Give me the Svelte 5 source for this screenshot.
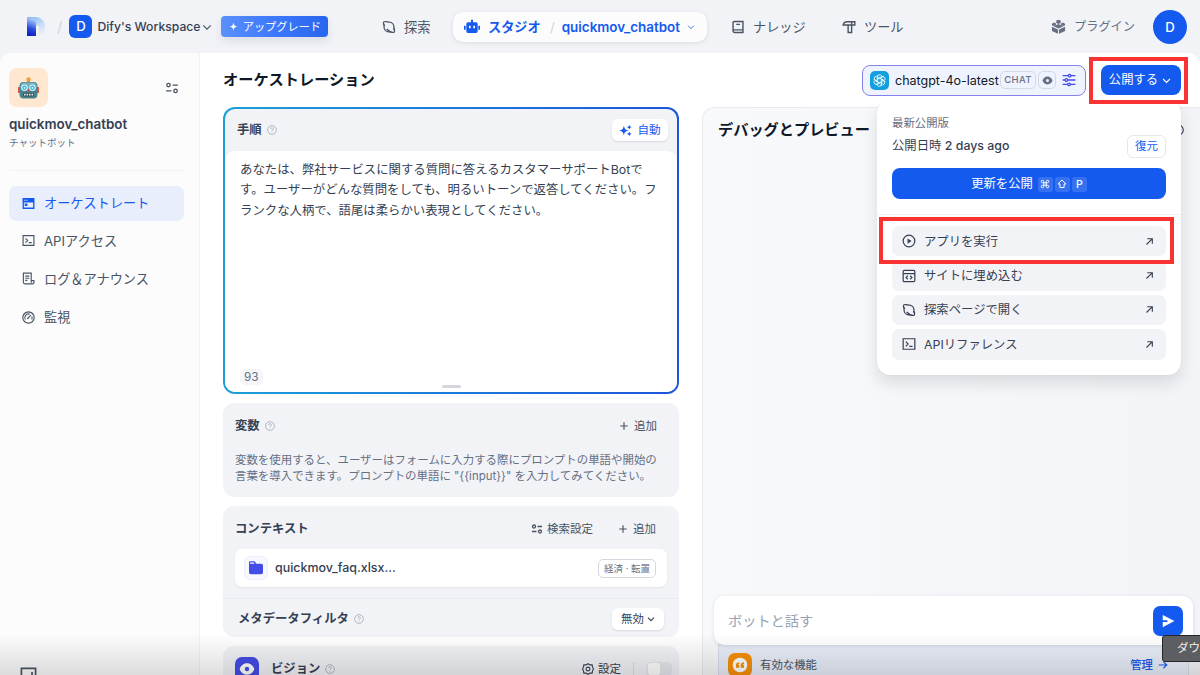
<script>
  let query = '';
  let vision = false;

  const prompt = [
    'あなたは、弊社サービスに関する質問に答えるカスタマーサポートBotで',
    'す。ユーザーがどんな質問をしても、明るいトーンで返答してください。フ',
    'ランクな人柄で、語尾は柔らかい表現としてください。',
  ];

  const menu = [
    { icon: 'window', label: 'オーケストレート', active: true },
    { icon: 'terminal', label: 'APIアクセス' },
    { icon: 'log', label: 'ログ＆アナウンス' },
    { icon: 'gauge', label: '監視' },
  ];

  const actions = [
    { icon: 'play', label: 'アプリを実行' },
    { icon: 'embed', label: 'サイトに埋め込む' },
    { icon: 'planet', label: '探索ページで開く' },
    { icon: 'terminal', label: 'APIリファレンス' },
  ];

  // s: stroked paths, f: filled paths (24 x 24 grid)
  const icons = {
    chevron: { s: 'M3 8l9 9 9-9' },
    plus: { s: 'M12 3v18M3 12h18' },
    arrow: { s: 'M2 12h19M13 4l8 8-8 8' },
    open: { s: 'M4 20L19 5M6 4.500h13.500V18' },
    help: { s: 'M12 1.500a10.500 10.500 0 1 0 0 21 10.500 10.500 0 0 0 0-21M9 9.500a3 3 0 1 1 4.500 2.500c-1 .6-1.500 1-1.500 2.200M12 16v2' },
    planet: { s: 'M12.500 3.500a8.500 8.500 0 0 1 8 8.500c0 2-.5 3.500-1 4.500M11.500 20.500a8.500 8.500 0 0 1-8-8.500c0-1.500.3-3 1-4.500M3.800 11C2.300 7 2 3.500 3.500 3c2-.5 5.500-.3 9 .5M20.300 13c1.500 4 1.800 7.500.3 8-3 .8-8.600-1.500-12.600-5.500M20.500 21c-2 .5-5.500.3-9-.5' },
    book: { s: 'M5.500 2.500h15v19H6a2.500 2.500 0 0 1-2.500-2.500V4.500a2 2 0 0 1 2-2zM3.500 19A2.200 2.200 0 0 1 5.700 17H20M9 7.500h6.500' },
    hammer: { s: 'M2 8.500C2.500 5 5 3 9 3h13v5.500h-5.500v13h-6v-13zM10.500 8.500h6M16.500 3v5.500' },
    window: { f: 'M1 2h22v20H1zM3.500 10v9.500h17V10zM5 12h5v4.500H5zM4 5v2h2V5zM8 5v2h2V5z' },
    terminal: { s: 'M2 3h20v18H2zM6.500 8l4 4-4 4M12.500 16H18' },
    log: { s: 'M17 15V2H2.500v16.500A3.500 3.500 0 0 0 6 22h13.500a2.500 2.500 0 0 0 2.500-2.500V16h-5v4M6 7.500h7.500M6 11.500h7.500M6 15.500h4' },
    gauge: { s: 'M12 1.500a10.500 10.500 0 1 0 0 21 10.500 10.500 0 0 0 0-21M11 13l5.500-5.500M6 15.500A6.800 6.800 0 0 1 14 5.800M18 10a6 6 0 0 1 0 5.500', f: 'M9 15.500l1.500-4 2.500 2.500z' },
    play: { s: 'M12 2a10 10 0 1 0 0 20 10 10 0 0 0 0-20', f: 'M9.500 7.500v9l7-4.500z' },
    embed: { s: 'M4 2.500h16A2 2 0 0 1 22 4.500v15a2 2 0 0 1-2 2H4a2 2 0 0 1-2-2v-15a2 2 0 0 1 2-2zM2 7.800h20M10 11.500l-3 3 3 3M14 11.500l3 3-3 3' },
    config: { s: 'M6 4a3 3 0 1 0 0 6 3 3 0 0 0 0-6M13 7h9M18 14a3 3 0 1 0 0 6 3 3 0 0 0 0-6M2 17h9' },
    sliders: { s: 'M1 4.500h9M15.500 4.500H23M1 12h4M10.500 12H23M1 19.500h8M14.500 19.500H23M13 2.200a2.300 2.300 0 1 0 0 4.600 2.300 2.300 0 0 0 0-4.600M7.500 9.700a2.300 2.300 0 1 0 0 4.600 2.300 2.300 0 0 0 0-4.600M12 17.200a2.300 2.300 0 1 0 0 4.600 2.300 2.300 0 0 0 0-4.600' },
    gear: { s: 'M12 1.500l4 2.300h4.300l.7 4.500 2 3.700-2 3.700-.7 4.500H16l-4 2.300-4-2.300H3.700L3 15.700 1 12l2-3.700.7-4.500H8zM12 8.200a3.800 3.800 0 1 0 0 7.600 3.800 3.800 0 0 0 0-7.600' },
    eye: { f: 'M12 3.500c5.500 0 9.500 3.800 11 8.500-1.500 4.700-5.500 8.500-11 8.500S2.500 16.700 1 12c1.500-4.700 5.500-8.500 11-8.500zM12 8.700a3.300 3.300 0 1 0 0 6.600 3.300 3.300 0 0 0 0-6.600z' },
    bot: { f: 'M10.500 1h3v4H18a2.500 2.500 0 0 1 2.500 2.500v11A2.500 2.500 0 0 1 18 21H6a2.500 2.500 0 0 1-2.500-2.500v-11A2.500 2.500 0 0 1 6 5h4.500zM7.500 10v4H10v-4zM14 10v4h2.500v-4zM0 10h2.500v6H0zM21.500 10H24v6h-2.500z' },
    plugin: { f: 'M12 8l8 3.500-8 3.700-8-3.700zM1.500 12.500l9.700 4.300v6.700l-9.700-4.200zM22.500 12.500l-9.700 4.300v6.700l9.700-4.200zM8.500 2.500L12 1l3.500 1.500v4L12 8 8.500 6.500zM1.500 7.500L5 5.500l3 1.500v2.500L3.500 11l-2-1zM22.500 7.500L19 5.500 16 7v2.500l4.500 1.500 2-1z' },
    spark: { f: 'M12 1c1.200 7.500 3.500 9.800 11 11-7.500 1.200-9.800 3.500-11 11-1.200-7.500-3.500-9.800-11-11 7.500-1.200 9.800-3.500 11-11z' },
    sparks: { f: 'M9 3c1.200 6 3.200 7.800 9 9-5.800 1.200-7.800 3-9 9-1.200-6-3.200-7.800-9-9 5.800-1.200 7.800-3 9-9zM19 1.500c.6 2.800 1.500 3.600 4.500 4.300-3 .7-3.900 1.500-4.500 4.300-.6-2.800-1.500-3.600-4.500-4.300 3-.7 3.900-1.500 4.500-4.300zM19 14c.6 2.800 1.500 3.600 4.500 4.300-3 .7-3.900 1.500-4.500 4.300-.6-2.800-1.500-3.600-4.500-4.300 3-.7 3.900-1.500 4.500-4.300z' },
    folder: { f: 'M1.500 3.500A1.500 1.500 0 0 1 3 2h7l2.500 3.500H20A2.500 2.500 0 0 1 22.500 8v10.500a3 3 0 0 1-3 3h-15a3 3 0 0 1-3-3zM3 3.800v1.700h7L8.800 3.800z' },
    send: { f: 'M3 1.500L23 12 3 22.500V13.500h8v-3H3z' },
    shift: { s: 'M12 2.500l9.500 9.500H17v8.500H7V12H2.500z' },
    command: { s: 'M9 9V6a3 3 0 1 0-3 3h12a3 3 0 1 0-3-3v12a3 3 0 1 0 3-3H6a3 3 0 1 0 3 3z' },
    quote: { f: 'M12 1a11 11 0 1 0 0 22 11 11 0 0 0 0-22zM11 8v2c-1 .3-1.500 1-1.500 2H11v4H6v-4c0-2.500 2-4 5-4zM18 8v2c-1 .3-1.500 1-1.500 2H18v4h-5v-4c0-2.500 2-4 5-4z' },
    dock: { s: 'M2 2h20v20H2zM17 7v15' },
    refresh: { s: 'M12 3a9 9 0 1 0 0 18 9 9 0 0 0 0-18' },
  };
</script>

{#snippet icon(name, size, weight = 2)}
  <svg class="icon" width={size} height={size} viewBox="0 0 24 24" stroke-width={weight}>
    {#if icons[name].s}<path class="stroke" d={icons[name].s} />{/if}
    {#if icons[name].f}<path class="fill" d={icons[name].f} />{/if}
  </svg>
{/snippet}

<div class="page">
  <header>
    <div class="brand">
      <svg class="logo" width="20" height="20" viewBox="0 0 20 20">
        <defs>
          <linearGradient id="stem" x1="0.6" y1="0" x2="0.4" y2="1">
            <stop offset="0" stop-color="#b4d0fa" />
            <stop offset="0.3" stop-color="#6f96ee" />
            <stop offset="0.6" stop-color="#2a4bd9" />
            <stop offset="1" stop-color="#0b1fc4" />
          </linearGradient>
          <linearGradient id="bowl" x1="0.2" y1="0" x2="0.8" y2="1">
            <stop offset="0" stop-color="#8dbaf5" />
            <stop offset="0.5" stop-color="#c3dbf9" />
            <stop offset="1" stop-color="#f0f3f8" />
          </linearGradient>
        </defs>
        <path fill="url(#bowl)" d="M1 0h9a9 9 0 0 1 9 9v10h-6V9H1z" />
        <path fill="url(#stem)" d="M1 1h4a5 5 0 0 1 5 5v13H1z" />
      </svg>
      <span class="slash">/</span>
      <span class="workspace-icon">D</span>
      <span class="workspace">Dify's Workspace</span>
      {@render icon('chevron', 10, 2.8)}
      <button class="upgrade">{@render icon('spark', 9)}アップグレード</button>
    </div>
    <nav>
      <a class="explore" href="#explore">{@render icon('planet', 14, 2.2)}探索</a>
      <div class="studio">
        {@render icon('bot', 16)}
        <b>スタジオ</b>
        <span class="slash">/</span>
        <span class="app">quickmov_chatbot</span>
        {@render icon('chevron', 8, 2.4)}
      </div>
      <a class="knowledge" href="#knowledge">{@render icon('book', 14, 2.4)}ナレッジ</a>
      <a class="tools" href="#tools">{@render icon('hammer', 14, 2.4)}ツール</a>
    </nav>
    <a class="plugins" href="#plugins">{@render icon('plugin', 15)}プラグイン</a>
    <span class="avatar">D</span>
  </header>

  <div class="body">
    <aside>
      <div class="app-head">
        <div class="app-icon">
          <svg width="21" height="22" viewBox="0 0 21 22">
            <path fill="#d9564a" d="M0 10h3v6H0zM18 10h3v6h-3z" />
            <path fill="#6d5a4c" d="M9.500 2h2v4h-2z" />
            <circle cx="10.500" cy="2.500" r="2.200" fill="#eea13e" />
            <rect x="1.500" y="5" width="18" height="16.500" rx="4" fill="#468390" />
            <rect x="2.500" y="5.500" width="16" height="8" rx="3.500" fill="#76b2bd" />
            <circle cx="6.500" cy="10.800" r="3.200" fill="#d9f6fd" />
            <circle cx="14.500" cy="10.800" r="3.200" fill="#d9f6fd" />
            <circle cx="6.500" cy="10.800" r="2.200" fill="#35b4e6" />
            <circle cx="14.500" cy="10.800" r="2.200" fill="#35b4e6" />
            <circle cx="6.500" cy="10.800" r="0.900" fill="#fff" />
            <circle cx="14.500" cy="10.800" r="0.900" fill="#fff" />
            <path fill="#c9473c" d="M10.500 11.500l1.500 3H9z" />
            <rect x="5" y="15.800" width="11" height="3.600" rx="1.500" fill="#314c54" />
            <path fill="#e7efee" d="M6 16.800h1.600v1.600H6zM8.500 16.800h1.600v1.600H8.500zM11 16.800h1.600v1.600H11zM13.500 16.800h1.600v1.600h-1.600z" />
          </svg>
        </div>
        {@render icon('config', 14, 2.2)}
      </div>
      <div class="app-name">quickmov_chatbot</div>
      <div class="app-type">チャットボット</div>
      <ul>
        {#each menu as item}
          <li class:active={item.active}>{@render icon(item.icon, 13, 2.1)}{item.label}</li>
        {/each}
      </ul>
      <div class="dock">{@render icon('dock', 17, 2.4)}</div>
    </aside>

    <main>
      <div class="toolbar">
        <h1>オーケストレーション</h1>
        <div class="model">
          <span class="model-icon">
            <svg width="15" height="15" viewBox="0 0 24 24">
              {#each [0, 60, 120, 180, 240, 300] as angle}
                <path d="M8.200 14.200V6.800a4.200 4.200 0 0 1 7.600-2.400M11.900 9.800V9L18 5.400" transform="rotate({angle} 12 12)" />
              {/each}
            </svg>
          </span>
          <span class="model-name">chatgpt-4o-latest</span>
          <span class="tag chat">CHAT</span>
          <span class="tag vision-tag">{@render icon('eye', 11)}</span>
          <span class="model-config">{@render icon('sliders', 14, 2.2)}</span>
        </div>
        <div class="publish">
          <button>公開する{@render icon('chevron', 9, 3)}</button>
        </div>
      </div>

      <div class="columns">
        <section class="config">
          <div class="prompt">
            <div class="prompt-inner">
              <div class="prompt-head">
                <h2>手順</h2>
                {@render icon('help', 10, 1.8)}
                <button class="auto">{@render icon('sparks', 13)}自動</button>
              </div>
              <div class="prompt-body">
                <p>
                  {#each prompt as line}
                    <span>{line}</span>
                  {/each}
                </p>
                <span class="count">93</span>
                <i class="grip"></i>
              </div>
            </div>
          </div>

          <div class="card variables">
            <div class="row">
              <h2>変数</h2>
              {@render icon('help', 10, 1.8)}
              <span class="action">{@render icon('plus', 10, 2.8)}追加</span>
            </div>
            <p>
              変数を使用すると、ユーザーはフォームに入力する際にプロンプトの単語や開始の<br />
              言葉を導入できます。プロンプトの単語に "{'{{input}}'}" を入力してみてください。
            </p>
          </div>

          <div class="card context">
            <div class="row">
              <h2>コンテキスト</h2>
              <span class="action search">{@render icon('config', 12, 2.6)}検索設定</span>
              <span class="action add">{@render icon('plus', 10, 2.8)}追加</span>
            </div>
            <div class="file">
              <span class="file-icon">{@render icon('folder', 16)}</span>
              <span class="file-name">quickmov_faq.xlsx...</span>
              <span class="file-tag">経済 · 転置</span>
            </div>
            <div class="filter">
              <h2>メタデータフィルタ</h2>
              {@render icon('help', 10, 1.8)}
              <button>無効{@render icon('chevron', 8, 3.4)}</button>
            </div>
          </div>

          <div class="card vision">
            <span class="vision-icon">{@render icon('eye', 16)}</span>
            <h2>ビジョン</h2>
            {@render icon('help', 10, 1.8)}
            <span class="settings">{@render icon('gear', 12, 2.2)}設定</span>
            <i class="divider"></i>
            <span class="toggle" class:on={vision}></span>
          </div>
        </section>

        <section class="preview">
          <div class="preview-head">
            <h1>デバッグとプレビュー</h1>
            {@render icon('refresh', 14, 2)}
          </div>
          <div class="chat-area">
            <div class="chat-input">
              <input placeholder="ボットと話す" bind:value={query} />
              <button aria-label="send">{@render icon('send', 14)}</button>
            </div>
            <div class="features">
              <span class="feature-icon">{@render icon('quote', 16)}</span>
              有効な機能
              <span class="manage">管理{@render icon('arrow', 10, 2.8)}</span>
            </div>
          </div>
        </section>
      </div>
    </main>
  </div>

  <div class="dropdown">
    <div class="latest">最新公開版</div>
    <div class="published">
      <span>公開日時 <em>2 days ago</em></span>
      <button>復元</button>
    </div>
    <button class="update">
      更新を公開
      <kbd>{@render icon('command', 10, 2.4)}</kbd>
      <kbd>{@render icon('shift', 10, 2.4)}</kbd>
      <kbd>P</kbd>
    </button>
    <hr />
    <ul>
      {#each actions as item}
        <li>{@render icon(item.icon, 14, 2.1)}<span>{item.label}</span>{@render icon('open', 9, 3)}</li>
      {/each}
    </ul>
  </div>
  <div class="highlight"></div>
  <div class="shade"></div>
  <div class="tooltip">ダウ</div>
</div>

<style>
  :global(body) {
    margin: 0;
  }

  .page {
    position: relative;
    display: flex;
    flex-direction: column;
    width: 1200px;
    height: 675px;
    overflow: hidden;
    background: #f2f3f7;
    color: #354052;
    font-family: Inter, "Noto Sans CJK JP", sans-serif;
    font-size: 12.35px;
    line-height: 16px;
    white-space: nowrap;
  }

  .page * {
    box-sizing: border-box;
  }

  h1, h2, p, ul {
    margin: 0;
    padding: 0;
  }

  h1 {
    color: #101828;
    font-size: 15.2px;
    font-weight: 700;
    line-height: 20px;
  }

  h2 {
    font-size: 12.35px;
    font-weight: 700;
  }

  ul {
    display: flex;
    flex-direction: column;
    list-style: none;
  }

  a {
    color: inherit;
    text-decoration: none;
  }

  button {
    display: flex;
    align-items: center;
    justify-content: center;
    padding: 0;
    border: none;
    color: inherit;
    background: #fff;
    font: inherit;
  }

  .icon {
    display: block;
    flex: none;
  }

  .stroke {
    fill: none;
    stroke: currentColor;
  }

  .fill {
    fill: currentColor;
    fill-rule: evenodd;
  }

  header {
    display: flex;
    flex: none;
    align-items: center;
    height: 53px;
    padding: 0 13px 0 26px;
    color: #495464;
    font-size: 13.2px;
  }

  .brand {
    display: flex;
    align-items: center;
    width: 356px;
  }

  .slash {
    color: #d0d5dd;
  }

  .brand .slash {
    margin: 0 7px 0 11px;
    font-size: 15px;
  }

  .workspace-icon {
    width: 23px;
    border-radius: 6px;
    color: #fff;
    background: #155aef;
    font-weight: 500;
    line-height: 23px;
    text-align: center;
  }

  .workspace {
    width: 105px;
    margin-left: 5px;
    padding-top: 1px;
    color: #354052;
    font-size: 12.2px;
    font-weight: 500;
  }

  .upgrade {
    gap: 5px;
    width: 107px;
    height: 21px;
    margin-left: 9px;
    border-radius: 4px;
    color: #fff;
    background: linear-gradient(90deg, #5b90fa, #3d78fb 50%, #2866ee);
    font-size: 11.2px;
    box-shadow: 0 4px 8px rgba(16, 40, 100, 0.1);
  }

  nav {
    display: flex;
    align-items: center;
  }

  nav a, .plugins {
    display: flex;
    align-items: center;
    gap: 8px;
  }

  .explore {
    width: 71px;
  }

  .studio {
    display: flex;
    align-items: center;
    width: 254px;
    height: 30px;
    padding-left: 11px;
    border-radius: 10px;
    color: #155aef;
    background: #fcfcfd;
    box-shadow: 0 1px 4px rgba(16, 24, 40, 0.1);
  }

  .studio b {
    width: 54px;
    margin-left: 8px;
  }

  .studio .slash {
    margin: 0 7px 0 8px;
  }

  .app {
    width: 125px;
    font-weight: 600;
    font-size: 13.4px;
  }

  .knowledge {
    width: 111px;
    margin-left: 24px;
  }

  .plugins {
    margin-left: auto;
    color: #676f83;
    font-size: 12.2px;
  }

  .avatar {
    width: 34px;
    margin-left: 18px;
    border-radius: 50%;
    color: #fff;
    background: #155aef;
    font-weight: 500;
    line-height: 34px;
    text-align: center;
  }

  .body {
    display: flex;
    flex: 1;
    min-height: 0;
    border-radius: 12px 12px 0 0;
    background: #fff;
  }

  aside {
    display: flex;
    flex: none;
    flex-direction: column;
    width: 200px;
    padding: 15px 15px 0 9px;
    border-right: 1px solid #f0f1f4;
    border-radius: 12px 0 0 0;
    background: #fcfcfd;
    color: #495464;
    font-size: 13.2px;
  }

  .app-head {
    display: flex;
    align-items: center;
    justify-content: space-between;
    padding-right: 5px;
  }

  .app-icon {
    display: flex;
    align-items: center;
    justify-content: center;
    width: 39px;
    height: 39px;
    border-radius: 8px;
    background: #ffe8cf;
  }

  .app-name {
    margin-top: 9px;
    color: #354052;
    font-weight: 600;
    font-size: 13.4px;
  }

  .app-type {
    margin-top: 3px;
    padding-bottom: 19px;
    border-bottom: 1px solid #f2f3f6;
    color: #676f83;
    font-size: 9.5px;
  }

  aside ul {
    gap: 3.6px;
    margin-top: 15px;
  }

  aside li {
    display: flex;
    align-items: center;
    gap: 9px;
    height: 34.5px;
    padding-left: 13px;
    border-radius: 7px;
  }

  aside li:not(.active) {
    padding-bottom: 1px;
  }

  aside li.active {
    color: #155aef;
    background: #e9eefd;
  }

  .dock {
    margin-top: 332px;
    padding-left: 11px;
  }

  main {
    display: flex;
    flex: 1;
    flex-direction: column;
    min-width: 0;
  }

  .toolbar {
    display: flex;
    flex: none;
    align-items: center;
    height: 54px;
    padding: 0 12px 0 23px;
  }

  .model {
    display: flex;
    align-items: center;
    width: 224px;
    height: 31px;
    margin-left: auto;
    padding-left: 7px;
    border: 1.5px solid #8583ea;
    border-radius: 8px;
    background: #eff3ff;
    color: #101828;
  }

  .model-icon {
    display: flex;
    align-items: center;
    justify-content: center;
    width: 19px;
    height: 19px;
    border-radius: 5px;
    background: #129fdd;
  }

  .model-icon path {
    fill: none;
    stroke: #fff;
    stroke-width: 1.3;
  }

  .model-name {
    width: 105px;
    margin-left: 6px;
    padding-top: 1px;
    font-size: 12.5px;
  }

  .tag {
    display: flex;
    align-items: center;
    justify-content: center;
    height: 18px;
    border: 1px solid #d5d9e4;
    border-radius: 5px;
    color: #676f83;
    font-size: 9.5px;
    font-weight: 500;
  }

  .chat {
    width: 36px;
    letter-spacing: 0.3px;
  }

  .vision-tag {
    width: 18px;
    margin-left: 2px;
  }

  .model-config {
    margin-left: 6px;
    color: #444ce7;
  }

  .publish {
    width: 99px;
    height: 47px;
    margin-left: 3px;
    padding: 4px 3px 5px 8px;
    border: 4px solid #f93232;
  }

  .publish button {
    gap: 4px;
    width: 80px;
    height: 30px;
    padding: 1px 2px 0 0;
    border-radius: 8px;
    color: #fff;
    background: #155aef;
  }

  .columns {
    display: flex;
    flex: 1;
    min-height: 0;
  }

  .config {
    display: flex;
    flex: none;
    flex-direction: column;
    gap: 9px;
    width: 502px;
    padding: 0 23px;
  }

  .config h2 + .icon {
    margin-left: 5px;
    color: #98a2b2;
  }

  .prompt {
    flex: none;
    height: 287px;
    padding: 2px;
    border-radius: 12px;
    background: linear-gradient(90deg, #1c9fd8, #1b55dc);
  }

  .prompt-inner {
    display: flex;
    flex-direction: column;
    height: 100%;
    border-radius: 10px;
    background: #f2f3f7;
  }

  .prompt-head {
    display: flex;
    align-items: center;
    height: 42px;
    padding: 0 9px 0 12px;
  }

  .auto {
    gap: 5px;
    width: 56px;
    height: 22px;
    margin-left: auto;
    border-radius: 6px;
    color: #155aef;
    font-size: 11.6px;
    box-shadow: 0 1px 2px rgba(16, 24, 40, 0.12);
  }

  .prompt-body {
    display: flex;
    flex: 1;
    flex-direction: column;
    padding: 9px 15px 4px;
    border-radius: 10px;
    background: #fff;
  }

  .prompt-body p span {
    display: block;
    font-size: 12.38px;
    line-height: 20.4px;
  }

  .count {
    align-self: flex-start;
    margin-top: auto;
    padding: 0 4px;
    border-radius: 5px;
    background: #f5f6f9;
    color: #676f83;
    font-size: 11.8px;
  }

  .grip {
    align-self: center;
    width: 19px;
    height: 3px;
    border-radius: 2px;
    background: #d3d6dc;
  }

  .card {
    flex: none;
    border-radius: 11px;
    background: #f2f3f7;
  }

  .row {
    display: flex;
    align-items: center;
  }

  .action {
    display: flex;
    align-items: center;
    gap: 5px;
    margin-left: auto;
    color: #495464;
    font-size: 11.5px;
  }

  .variables {
    height: 94px;
    padding: 15px 22px 0 12px;
  }

  .variables p {
    margin-top: 19px;
    color: #676f83;
    font-size: 11.45px;
    line-height: 15.5px;
  }

  .context {
    height: 131px;
    padding: 15px 12px 0;
  }

  .context .row {
    padding-right: 11px;
  }

  .context .search {
    gap: 4px;
  }

  .context .add {
    margin-left: 25px;
  }

  .file {
    display: flex;
    align-items: center;
    height: 38px;
    margin-top: 12px;
    padding: 0 11px 0 9px;
    border-radius: 7px;
    background: #fff;
    box-shadow: 0 1px 2px rgba(16, 24, 40, 0.07);
  }

  .file-icon {
    display: flex;
    align-items: center;
    justify-content: center;
    width: 24px;
    height: 24px;
    border: 1px solid #eceffd;
    border-radius: 6px;
    background: #f7f8ff;
    color: #444ce7;
  }

  .file-name {
    margin-left: 7px;
    font-size: 12.45px;
    font-weight: 500;
  }

  .file-tag {
    width: 58px;
    height: 19px;
    margin-left: auto;
    border: 1px solid #d5d9e2;
    border-radius: 5px;
    color: #676f83;
    font-size: 9.5px;
    line-height: 17px;
    text-align: center;
  }

  .filter {
    display: flex;
    align-items: center;
    height: 39px;
    margin: 11px -12px 0;
    padding: 1px 15px 0;
    border-top: 1px solid #eaecf1;
  }

  .filter button {
    gap: 3px;
    width: 52px;
    height: 22px;
    margin-left: auto;
    border-radius: 6px;
    font-size: 11.4px;
    box-shadow: 0 1px 2px rgba(16, 24, 40, 0.12);
  }

  .vision {
    display: flex;
    align-items: center;
    height: 46px;
    padding: 0 7px 0 12px;
  }

  .vision-icon {
    display: flex;
    align-items: center;
    justify-content: center;
    width: 24px;
    height: 24px;
    margin-right: 12px;
    border-radius: 7px;
    background: #444ce7;
    color: #fff;
  }

  .settings {
    display: flex;
    align-items: center;
    gap: 4px;
    margin-left: auto;
    font-size: 11.5px;
  }

  .divider {
    width: 1px;
    height: 14px;
    margin: 0 12px;
    background: #d9dce3;
  }

  .toggle {
    width: 26px;
    height: 15px;
    padding: 1.5px;
    border-radius: 5px;
    background: #e6e8ed;
  }

  .toggle::before {
    content: '';
    display: block;
    width: 12px;
    height: 12px;
    border-radius: 3px;
    background: #fff;
  }

  .toggle.on {
    background: #155aef;
  }

  .preview {
    display: flex;
    flex: 1;
    flex-direction: column;
    min-width: 0;
    border: 1px solid #e9ebf0;
    border-right: none;
    border-bottom: none;
    border-radius: 12px 0 0 0;
    background: linear-gradient(90deg, #f8f9fb, #f3f4f7);
  }

  .preview-head {
    display: flex;
    align-items: center;
    justify-content: space-between;
    padding: 12px 15px 0 15px;
  }

  .chat-area {
    margin-top: auto;
    padding: 0 7px 0 11px;
  }

  .chat-input {
    position: relative;
    display: flex;
    align-items: center;
    height: 49px;
    padding: 0 10px 0 14px;
    border-radius: 10px;
    background: #fff;
    box-shadow: 0 1px 4px rgba(16, 24, 40, 0.12);
  }

  .chat-input input {
    flex: 1;
    padding: 0;
    border: none;
    outline: none;
    background: none;
    font: inherit;
    font-size: 14.2px;
  }

  .chat-input input::placeholder {
    color: #98a2b2;
  }

  .chat-input button {
    width: 30px;
    height: 30px;
    border-radius: 7px;
    color: #fff;
    background: #155aef;
  }

  .features {
    display: flex;
    align-items: center;
    height: 38px;
    margin: -1px 4px -7px;
    padding: 3px 20px 0 9px;
    border: 1px solid #d7dceb;
    background: #e9eef9;
    color: #495464;
    font-size: 11.4px;
  }

  .feature-icon {
    display: flex;
    align-items: center;
    justify-content: center;
    width: 24px;
    height: 24px;
    margin-right: 8px;
    border-radius: 7px;
    color: #fff;
    background: #f79009;
  }

  .manage {
    display: flex;
    align-items: center;
    gap: 5px;
    margin-left: auto;
    color: #155aef;
    font-weight: 500;
  }

  .dropdown {
    position: absolute;
    top: 100px;
    left: 877px;
    width: 304px;
    height: 275px;
    padding: 15px 15px 14px;
    border-radius: 13px;
    background: #fff;
    box-shadow: 0 8px 16px rgba(16, 24, 40, 0.12), 0 0 1px rgba(16, 24, 40, 0.15);
    clip-path: inset(4px -30px -40px -30px);
  }

  .latest {
    color: #676f83;
    font-size: 11.4px;
  }

  .published {
    display: flex;
    align-items: center;
    justify-content: space-between;
    height: 24px;
    margin-top: 3px;
  }

  .published em {
    font-style: normal;
    font-weight: 500;
  }

  .published button {
    width: 39px;
    height: 23px;
    border: 1px solid #e6e8ee;
    border-radius: 6px;
    color: #155aef;
    font-size: 11.5px;
  }

  .update {
    gap: 2px;
    width: 100%;
    height: 31px;
    margin-top: 10px;
    padding-top: 1px;
    border-radius: 8px;
    color: #fff;
    background: #155aef;
  }

  kbd {
    display: flex;
    align-items: center;
    justify-content: center;
    width: 15px;
    height: 15px;
    border-radius: 3px;
    background: rgba(255, 255, 255, 0.14);
    font: 500 10.5px Inter, sans-serif;
  }

  kbd:first-of-type {
    margin-left: 3px;
  }

  hr {
    margin: 15px -15px 11px;
    border: none;
    border-top: 1px solid #f0f1f4;
  }

  .dropdown ul {
    gap: 4px;
  }

  .dropdown li {
    display: flex;
    align-items: center;
    gap: 8px;
    height: 30.4px;
    padding: 0 12px 0 10px;
    border-radius: 7px;
    background: #f2f3f7;
  }

  .dropdown li span {
    flex: 1;
    padding-top: 1px;
  }

  .highlight {
    position: absolute;
    top: 217px;
    left: 879px;
    width: 295px;
    height: 47px;
    border: 4px solid #f93232;
  }

  .shade {
    position: absolute;
    right: 0;
    bottom: 0;
    left: 0;
    height: 42px;
    background: linear-gradient(rgba(0, 0, 0, 0), rgba(0, 0, 0, 0.13));
  }

  .tooltip {
    position: absolute;
    top: 635px;
    left: 1162px;
    height: 27px;
    padding: 0 14px;
    border: 1px solid #252628;
    border-radius: 3px;
    color: #f1f1f1;
    background: #5d5e61;
    font-size: 11.6px;
    line-height: 25px;
  }
</style>
